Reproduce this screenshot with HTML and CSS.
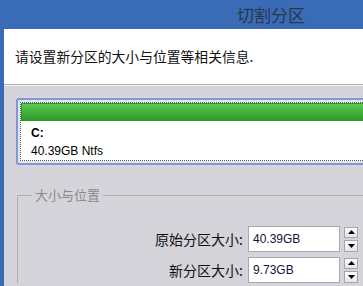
FILE: index.html
```html
<!DOCTYPE html>
<html lang="zh-CN">
<head>
<meta charset="utf-8">
<title>切割分区</title>
<link rel="stylesheet" href="styles.css">
</head>
<body>
<div class="titlebar"><span class="title">切割分区</span></div>
<div class="window">
  <div class="header"><p class="intro">请设置新分区的大小与位置等相关信息.</p></div>
  <div class="content">
    <div class="partition">
      <div class="pinner">
        <div class="bar"></div>
        <div class="pinfo">
          <div class="drive">C:</div>
          <div class="size">40.39GB Ntfs</div>
        </div>
      </div>
    </div>
    <fieldset class="group">
      <legend>大小与位置</legend>
      <div class="row first">
        <label class="lbl">原始分区大小:</label>
        <div class="input">40.39GB</div>
        <div class="spin">
          <span class="sbtn"><svg width="7" height="4" viewBox="0 0 7 4"><path d="M3.5 0L7 4H0z" fill="#000"/></svg></span>
          <span class="sbtn"><svg width="7" height="4" viewBox="0 0 7 4"><path d="M0 0H7L3.5 4z" fill="#000"/></svg></span>
        </div>
      </div>
      <div class="row">
        <label class="lbl">新分区大小:</label>
        <div class="input">9.73GB</div>
        <div class="spin">
          <span class="sbtn"><svg width="7" height="4" viewBox="0 0 7 4"><path d="M3.5 0L7 4H0z" fill="#000"/></svg></span>
          <span class="sbtn"><svg width="7" height="4" viewBox="0 0 7 4"><path d="M0 0H7L3.5 4z" fill="#000"/></svg></span>
        </div>
      </div>
    </fieldset>
  </div>
</div>
</body>
</html>
```
FILE: styles.css
```css
html, body {
  margin: 0;
  padding: 0;
}
body {
  width: 363px;
  height: 286px;
  overflow: hidden;
  background: #3a6bb7;
  font-family: "Noto Sans CJK SC", "Liberation Sans", sans-serif;
}
.titlebar {
  height: 29px;
  display: flex;
  align-items: center;
  padding-left: 237px;
}
.title {
  font-size: 17px;
  color: #2b374a;
  line-height: 1;
}
.window {
  margin-left: 4px;
  height: 257px;
  background: #d5d4da;
  overflow: hidden;
}
.header {
  height: 55px;
  background: #fff;
  border-bottom: 1px solid #b4b4b8;
  display: flex;
  align-items: center;
  padding-left: 11px;
}
.intro {
  margin: 0;
  font-size: 13.8px;
  color: #111;
  line-height: 1;
}
.content {
  border-top: 1px solid #f2f2f4;
  padding: 12px 0 0 12px;
}
.partition {
  margin-right: -20px;
  border: 2px solid #7f99d8;
  border-radius: 3px;
  padding: 2px;
  background: #e6e6ea;
}
.pinner {
  border: 1px dotted #555;
  background: #fff;
}
.bar {
  height: 16px;
  border: 1px solid #2f962c;
  background: linear-gradient(#5acb52, #43b23e 50%, #319a2e);
}
.pinfo {
  padding: 3px 10px 0;
  font-family: "Liberation Sans", sans-serif;
  font-size: 12px;
  line-height: 18px;
  color: #000;
}
.drive {
  font-weight: bold;
}
.group {
  margin: 22px -20px 0 1px;
  padding: 0 0 0 14px;
  border: 1px solid #aeaeb2;
  border-right: none;
  border-bottom: none;
  min-width: 0;
}
.group legend {
  padding: 0 3px;
  font-size: 13px;
  line-height: 16px;
  color: #8a8a8e;
}
.row {
  display: grid;
  grid-template-columns: 212px 92px 14px;
  column-gap: 4px;
  align-items: center;
  height: 26px;
  margin-top: 5px;
}
.row.first {
  margin-top: 23px;
}
.lbl {
  justify-self: end;
  margin-right: 1px;
  font-size: 14px;
  color: #111;
  line-height: 1;
}
.input {
  box-sizing: border-box;
  width: 92px;
  height: 26px;
  border: 1px solid #a9a9ad;
  background: #fff;
  font-family: "Liberation Sans", sans-serif;
  font-size: 12px;
  line-height: 24px;
  padding-left: 4px;
  color: #141438;
}
.spin {
  display: flex;
  flex-direction: column;
  gap: 2px;
  height: 25px;
}
.sbtn {
  flex: 1;
  display: flex;
  align-items: center;
  justify-content: center;
  border: 1px solid #a6a6aa;
  background: linear-gradient(#fbfbfb, #e6e6e8);
}
```
